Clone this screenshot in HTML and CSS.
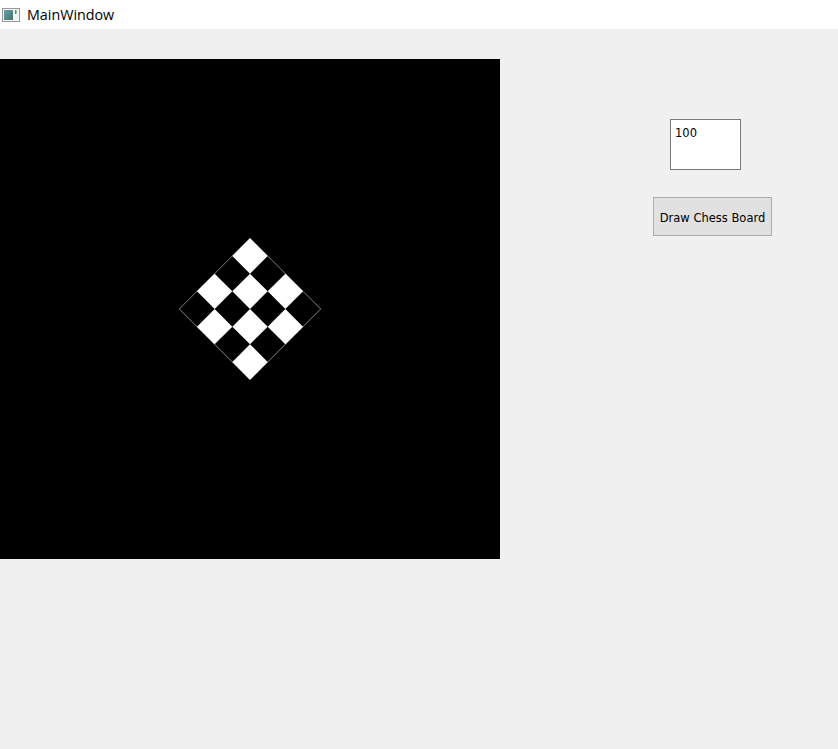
FILE: index.html
```html
<!DOCTYPE html>
<html>
<head>
<meta charset="utf-8">
<link rel="stylesheet" href="styles.css">
</head>
<body>
<div class="window">
  <div class="titlebar">
    <svg class="app-icon" width="18" height="14" viewBox="0 0 18 14">
      <defs>
        <linearGradient id="g" x1="0" y1="0" x2="1" y2="1">
          <stop offset="0" stop-color="#6f9fb0"/>
          <stop offset="1" stop-color="#3d7a5f"/>
        </linearGradient>
      </defs>
      <rect x="0.5" y="0.5" width="17" height="13" fill="#f4f4f4" stroke="#9a9a9a"/>
      <rect x="2" y="2" width="9" height="10" fill="url(#g)"/>
      <rect x="13" y="2" width="1.5" height="4" fill="#4f8f6a"/>
    </svg>
    <span class="title">MainWindow</span>
  </div>
  <div class="client">
    <div class="canvas">
      <svg width="500" height="500" viewBox="0 0 500 500">
        <g transform="translate(250 250) rotate(45) translate(-50 -50)">
          <rect x="0" y="0" width="100" height="100" fill="#000" stroke="#9a9a9a" stroke-width="0.8"/>
          <rect x="0" y="0" width="25" height="25" fill="#fff"/>
          <rect x="50" y="0" width="25" height="25" fill="#fff"/>
          <rect x="25" y="25" width="25" height="25" fill="#fff"/>
          <rect x="75" y="25" width="25" height="25" fill="#fff"/>
          <rect x="0" y="50" width="25" height="25" fill="#fff"/>
          <rect x="50" y="50" width="25" height="25" fill="#fff"/>
          <rect x="25" y="75" width="25" height="25" fill="#fff"/>
          <rect x="75" y="75" width="25" height="25" fill="#fff"/>
        </g>
      </svg>
    </div>
    <div class="side">
      <div class="input">100</div>
      <button class="btn">Draw Chess Board</button>
    </div>
  </div>
</div>
</body>
</html>
```
FILE: styles.css
```css
html, body {
  margin: 0;
  padding: 0;
  width: 838px;
  height: 749px;
  overflow: hidden;
  background: #f0f0f0;
}
.window {
  display: flex;
  flex-direction: column;
  width: 838px;
  height: 749px;
}
.titlebar {
  height: 29px;
  background: #fff;
  display: flex;
  align-items: center;
  padding-left: 2px;
  box-sizing: border-box;
}
.app-icon {
  display: block;
  margin-top: 0px;
}
.title {
  margin-left: 7px;
  font-family: "Open Sans", "Liberation Sans", sans-serif;
  font-size: 14.3px;
  color: #000;
  line-height: 1;
  margin-top: 1px;
}
.client {
  flex: 1;
  background: #f0f0f0;
  display: flex;
  padding-top: 30px;
  box-sizing: border-box;
}
.canvas {
  width: 500px;
  height: 500px;
  background: #000;
}
.canvas svg {
  display: block;
}
.side {
  display: flex;
  flex-direction: column;
  padding-top: 60px;
  padding-left: 153px;
}
.input {
  width: 71px;
  height: 51px;
  box-sizing: border-box;
  border: 1px solid #7a7a7a;
  background: #fff;
  margin-left: 17px;
  padding: 6px 0 0 4px;
  font-family: "DejaVu Sans", sans-serif;
  font-size: 11.5px;
  line-height: 14px;
  color: #000;
}
.btn {
  margin-top: 27px;
  width: 119px;
  height: 39px;
  box-sizing: border-box;
  border: 1px solid #adadad;
  background: #e1e1e1;
  font-family: "DejaVu Sans", sans-serif;
  font-size: 11.5px;
  color: #000;
  padding: 2px 0 0 0;
  border-radius: 0;
}
```
